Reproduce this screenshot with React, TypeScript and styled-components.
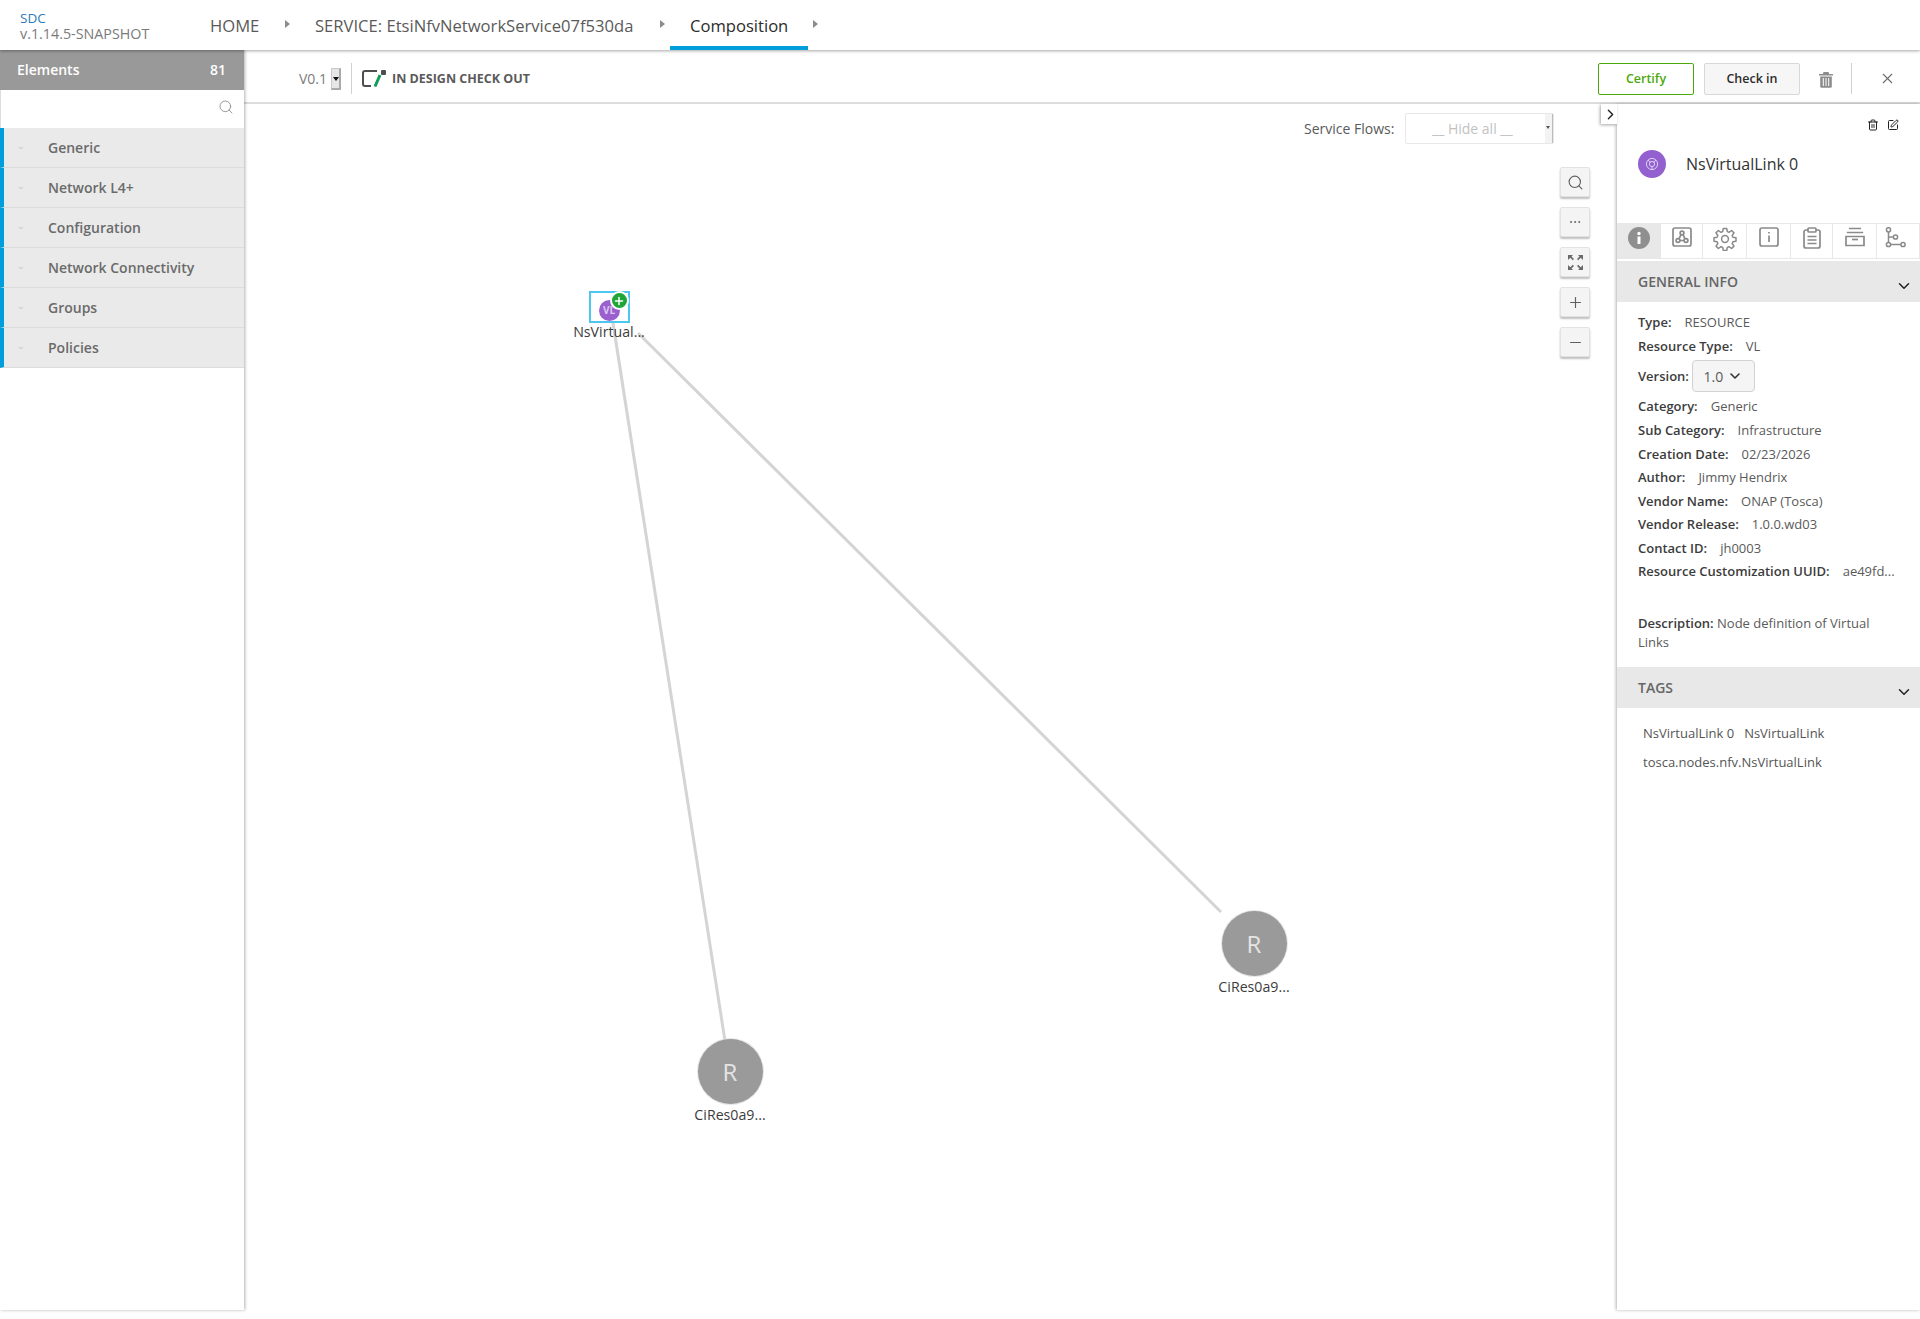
import React from 'react';
import styled, { createGlobalStyle } from 'styled-components';
import { Search, Plus, Minus, X, ChevronRight, ChevronDown, Trash2, SquarePen, Ellipsis } from 'lucide-react';

const GlobalStyle = createGlobalStyle`
    html, body {
        margin: 0;
        padding: 0;
        background: #fff;
        font-family: 'Open Sans', 'Liberation Sans', sans-serif;
        color: #5a5a5a;
    }
    * { box-sizing: border-box; }
`;

const crumbs = [
    { label: 'HOME', width: 105, active: false },
    { label: 'SERVICE: EtsiNfvNetworkService07f530da', width: 375, active: false },
    { label: 'Composition', width: 153, active: true },
];
const groups = ['Generic', 'Network L4+', 'Configuration', 'Network Connectivity', 'Groups', 'Policies'];
const infoRows = [
    { label: 'Type:', value: 'RESOURCE', height: 24 },
    { label: 'Resource Type:', value: 'VL', height: 24 },
];
const infoRowsAfter = [
    { label: 'Category:', value: 'Generic', height: 24 },
    { label: 'Sub Category:', value: 'Infrastructure', height: 24 },
    { label: 'Creation Date:', value: '02/23/2026', height: 23.5 },
    { label: 'Author:', value: 'Jimmy Hendrix', height: 23.5 },
    { label: 'Vendor Name:', value: 'ONAP (Tosca)', height: 23.5 },
    { label: 'Vendor Release:', value: '1.0.0.wd03', height: 23.5 },
    { label: 'Contact ID:', value: 'jh0003', height: 23.5 },
    { label: 'Resource Customization UUID:', value: 'ae49fd...', height: 23.5 },
];

export default function App() {
    return (
        <Page>
            <GlobalStyle />
            <Header>
                <Brand>
                    <BrandName>SDC</BrandName>
                    <BrandVersion>v.1.14.5-SNAPSHOT</BrandVersion>
                </Brand>
                <Crumbs>
                    {crumbs.map((c) => (
                        <Crumb key={c.label} $width={c.width}>
                            <CrumbLabel $active={c.active}>{c.label}</CrumbLabel>
                            <CrumbArrow />
                        </Crumb>
                    ))}
                </Crumbs>
            </Header>
            <Body>
                <Sidebar>
                    <SideTitle>
                        <span>Elements</span>
                        <span>81</span>
                    </SideTitle>
                    <SideSearch>
                        <Search size={16} strokeWidth={1.3} color="#8a8a8a" />
                    </SideSearch>
                    {groups.map((g) => (
                        <GroupRow key={g}>
                            <ChevronDown size={6} strokeWidth={2} color="#9a9a9a" />
                            <span>{g}</span>
                        </GroupRow>
                    ))}
                </Sidebar>
                <Main>
                    <Toolbar>
                        <VersionText>V0.1</VersionText>
                        <MiniSelect />
                        <ToolDivider />
                        <CheckoutIcon />
                        <StateText>IN DESIGN CHECK OUT</StateText>
                        <Spacer />
                        <CertifyButton>Certify</CertifyButton>
                        <CheckInButton>Check in</CheckInButton>
                        <TrashIcon />
                        <ToolDivider $tall />
                        <CloseWrap>
                            <X size={17} strokeWidth={1.6} color="#6b6b6b" />
                        </CloseWrap>
                    </Toolbar>
                    <Workspace>
                        <Canvas>
                            <FlowBar>
                                <FlowLabel>Service Flows:</FlowLabel>
                                <FlowSelect>
                                    <span>__ Hide all __</span>
                                    <FlowCaret />
                                </FlowSelect>
                            </FlowBar>
                            <ZoomColumn>
                                <ZoomButton><Search size={17} strokeWidth={1.6} /></ZoomButton>
                                <ZoomButton><Ellipsis size={14} strokeWidth={1.5} /></ZoomButton>
                                <ZoomButton><ExpandIcon /></ZoomButton>
                                <ZoomButton><Plus size={17} strokeWidth={1.6} /></ZoomButton>
                                <ZoomButton><Minus size={17} strokeWidth={1.6} /></ZoomButton>
                            </ZoomColumn>
                            <Lines width="1373" height="1215">
                                <line x1="369" y1="219" x2="481" y2="937" stroke="#d4d4d4" strokeWidth="3" />
                                <line x1="394" y1="229" x2="977" y2="808" stroke="#d4d4d4" strokeWidth="3" />
                            </Lines>
                            <VlNode>
                                <VlFrame>
                                    <VlCircle>VL</VlCircle>
                                    <PlusBadge>
                                        <Plus size={12} strokeWidth={3} color="#fff" />
                                    </PlusBadge>
                                </VlFrame>
                                <NodeLabel>NsVirtual...</NodeLabel>
                            </VlNode>
                            <ResourceNode $x={976} $y={807}>
                                <ResourceCircle>R</ResourceCircle>
                                <ResourceLabel>CiRes0a9...</ResourceLabel>
                            </ResourceNode>
                            <ResourceNode $x={452} $y={935}>
                                <ResourceCircle>R</ResourceCircle>
                                <ResourceLabel>CiRes0a9...</ResourceLabel>
                            </ResourceNode>
                        </Canvas>
                        <Panel>
                            <CollapseTab>
                                <ChevronRight size={17} strokeWidth={2} color="#222" />
                            </CollapseTab>
                            <PanelActions>
                                <Trash2 size={12} strokeWidth={2} color="#222" />
                                <SquarePen size={12} strokeWidth={2} color="#222" />
                            </PanelActions>
                            <PanelTitle>
                                <TitleCircle>
                                    <LinkGlyph />
                                </TitleCircle>
                                <TitleText>NsVirtualLink 0</TitleText>
                            </PanelTitle>
                            <Tabs>
                                <Tab $active $width={44}><InfoFilled /></Tab>
                                <Tab $width={42}><CompositionIcon /></Tab>
                                <Tab $width={44}><GearIcon /></Tab>
                                <Tab $width={44}><InfoSquare /></Tab>
                                <Tab $width={42}><ClipboardIcon /></Tab>
                                <Tab $width={44}><ArchiveIcon /></Tab>
                                <Tab $width={43}><BranchIcon /></Tab>
                            </Tabs>
                            <SectionBar>
                                <span>GENERAL INFO</span>
                                <ChevronDown size={18} strokeWidth={2} color="#222" />
                            </SectionBar>
                            <InfoBlock>
                                {infoRows.map((r) => (
                                    <InfoRow key={r.label} $height={r.height}>
                                        <b>{r.label}</b>
                                        <span>{r.value}</span>
                                    </InfoRow>
                                ))}
                                <VersionRow>
                                    <b>Version:</b>
                                    <VersionPicker>
                                        1.0 <ChevronDown size={16} strokeWidth={2.4} color="#333" />
                                    </VersionPicker>
                                </VersionRow>
                                {infoRowsAfter.map((r) => (
                                    <InfoRow key={r.label} $height={r.height}>
                                        <b>{r.label}</b>
                                        <span>{r.value}</span>
                                    </InfoRow>
                                ))}
                                <Description>
                                    <b>Description:</b> Node definition of Virtual Links
                                </Description>
                            </InfoBlock>
                            <SectionBar>
                                <span>TAGS</span>
                                <ChevronDown size={18} strokeWidth={2} color="#222" />
                            </SectionBar>
                            <TagBlock>
                                <TagLine>
                                    <span>NsVirtualLink 0</span>
                                    <span>NsVirtualLink</span>
                                </TagLine>
                                <TagLine>
                                    <span>tosca.nodes.nfv.NsVirtualLink</span>
                                </TagLine>
                            </TagBlock>
                        </Panel>
                    </Workspace>
                </Main>
            </Body>
        </Page>
    );
}

function CheckoutIcon() {
    return (
        <ToolIcon width="24" height="17" viewBox="0 0 24 17">
            <path d="M15 1H3a2 2 0 0 0-2 2v11a2 2 0 0 0 2 2h6" fill="none" stroke="#4f4f4f" strokeWidth="2" />
            <rect x="19" y="0" width="5" height="5" rx="1" fill="#4f4f4f" />
            <path d="M18 5 13 16.500" fill="none" stroke="#0f9d58" strokeWidth="3" />
        </ToolIcon>
    );
}

function TrashIcon() {
    return (
        <TrashWrap width="14" height="17" viewBox="0 0 14 17">
            <path d="M0 3h14v1.6H0zM4.500 1h5l.6 2H3.900z" fill="#8c8c8c" />
            <path d="M1.200 5.500h11.600V15.500a1.300 1.300 0 0 1-1.300 1.300H2.500a1.300 1.300 0 0 1-1.300-1.300z" fill="#8c8c8c" />
            <path d="M4.300 7v8M7 7v8M9.700 7v8" stroke="#fff" strokeWidth="1" />
        </TrashWrap>
    );
}

function ExpandIcon() {
    return (
        <svg width="15" height="15" viewBox="0 0 15 15" fill="#6a6a6a">
            <path d="M0 0h5L3.500 1.500 6 4 4.800 5.200 2.300 2.700 0 5z" />
            <path d="M15 0v5L12.700 2.700 10.200 5.200 9 4 11.500 1.500 10 0z" />
            <path d="M0 15v-5L2.300 12.300 4.800 9.800 6 11 3.500 13.500 5 15z" />
            <path d="M15 15h-5L11.500 13.500 9 11 10.200 9.800 12.700 12.300 15 10z" />
        </svg>
    );
}

function LinkGlyph() {
    return (
        <svg width="14" height="14" viewBox="0 0 14 14" fill="none" stroke="#e6daf5" strokeWidth="0.9">
            <circle cx="7" cy="7" r="5.600" />
            <circle cx="7" cy="7" r="2.600" />
            <path d="M3 3l2.500 2.500M11 3 8.800 5.500M7 12.500V9.600" />
        </svg>
    );
}

function InfoFilled() {
    return (
        <svg width="22" height="22" viewBox="0 0 22 22">
            <circle cx="11" cy="11" r="11" fill="#8f8f8f" />
            <rect x="9.500" y="9.500" width="3" height="7.500" fill="#fff" />
            <circle cx="11" cy="6.500" r="1.700" fill="#fff" />
        </svg>
    );
}

function CompositionIcon() {
    return (
        <svg width="20" height="20" viewBox="0 0 20 20" fill="none" stroke="#8a8a8a" strokeWidth="1.700">
            <rect x="1" y="1" width="18" height="18" rx="2" />
            <circle cx="10" cy="6" r="1.900" />
            <circle cx="6" cy="13.500" r="1.900" />
            <circle cx="14" cy="13.500" r="1.900" />
            <path d="M9 7.700 7 11.800M11 7.700l2 4.100M8 13.500h4" />
        </svg>
    );
}

function GearIcon() {
    return (
        <svg width="24" height="24" viewBox="0 0 24 24" fill="none" stroke="#8a8a8a" strokeWidth="1.500">
            <circle cx="12" cy="12" r="3.400" />
            <path d="M10.300 1.500h3.400l.6 3.100 1.700.7 2.600-1.800 2.400 2.400-1.800 2.600.7 1.700 3.100.6v3.400l-3.100.6-.7 1.700 1.800 2.600-2.400 2.400-2.600-1.800-1.700.7-.6 3.100h-3.400l-.6-3.100-1.700-.7-2.600 1.800-2.400-2.400 1.800-2.600-.7-1.700-3.100-.6v-3.400l3.100-.6.7-1.700-1.800-2.600 2.400-2.400 2.600 1.800 1.700-.7z" strokeLinejoin="round" />
        </svg>
    );
}

function InfoSquare() {
    return (
        <svg width="20" height="20" viewBox="0 0 20 20" fill="none" stroke="#8a8a8a" strokeWidth="1.700">
            <rect x="1" y="1" width="18" height="18" rx="2" />
            <path d="M10 8.500V15" />
            <path d="M10 5v1.600" />
        </svg>
    );
}

function ClipboardIcon() {
    return (
        <svg width="18" height="22" viewBox="0 0 18 22" fill="none" stroke="#8a8a8a" strokeWidth="1.700">
            <path d="M5 3H3A2 2 0 0 0 1 5v14a2 2 0 0 0 2 2h12a2 2 0 0 0 2-2V5a2 2 0 0 0-2-2H13" />
            <rect x="5" y="1" width="8" height="4" rx="1" />
            <path d="M4.500 9.500h9M4.500 13h9M4.500 16.500h9" />
        </svg>
    );
}

function ArchiveIcon() {
    return (
        <svg width="20" height="20" viewBox="0 0 20 20" fill="none" stroke="#8a8a8a" strokeWidth="1.700">
            <path d="M4 1.500h12M1.800 5.500h16.400" />
            <path d="M1 9.500h18v9H1z" />
            <path d="M7 12.500h6" />
        </svg>
    );
}

function BranchIcon() {
    return (
        <BranchSvg width="21" height="21" viewBox="0 0 21 21" fill="none" stroke="#8a8a8a" strokeWidth="1.500">
            <circle cx="3.500" cy="2.800" r="2.100" />
            <circle cx="3.500" cy="17.500" r="2.100" />
            <circle cx="10.500" cy="10" r="2.100" />
            <circle cx="18" cy="17.500" r="2.100" />
            <path d="M3.500 5v10.300M4 10h4.300M5.700 17.500h10.100" />
        </BranchSvg>
    );
}

const Page = styled.div`
    width: 1920px;
    height: 1319px;
    overflow: hidden;
    display: flex;
    flex-direction: column;
`;

const Header = styled.header`
    height: 50px;
    flex: none;
    display: flex;
    position: relative;
    z-index: 3;
    background: #fff;
    box-shadow: 0 1px 3px rgba(0, 0, 0, 0.35);
`;
const Brand = styled.div`
    width: 190px;
    padding: 11px 0 0 20px;
    line-height: 15px;
`;
const BrandName = styled.div`
    font-size: 13.500px;
    color: #2f7ab8;
`;
const BrandVersion = styled.div`
    font-size: 14.300px;
    color: #7a7a7a;
`;
const Crumbs = styled.nav`
    display: flex;
`;
const Crumb = styled.div<{ $width: number }>`
    width: ${(p) => p.$width}px;
    height: 50px;
    display: flex;
    justify-content: space-between;
`;
const CrumbLabel = styled.div<{ $active: boolean }>`
    height: 50px;
    line-height: 52px;
    font-size: 16.600px;
    padding: 0 20px;
    white-space: nowrap;
    color: ${(p) => (p.$active ? '#2c2c2c' : '#5a5a5a')};
    border-bottom: ${(p) => (p.$active ? '4px solid #009fdb' : 'none')};
`;
const CrumbArrow = styled.div`
    width: 0;
    height: 0;
    margin: 20px 5px 0 0;
    border-left: 5px solid #8c8c8c;
    border-top: 4px solid transparent;
    border-bottom: 4px solid transparent;
`;

const Body = styled.div`
    flex: 1;
    display: flex;
    min-height: 0;
`;

const Sidebar = styled.aside`
    width: 244px;
    flex: none;
    height: 1260px;
    position: relative;
    z-index: 2;
    background: #fff;
    box-shadow: 1px 0 3px rgba(0, 0, 0, 0.3);
`;
const SideTitle = styled.div`
    height: 40px;
    background: #999;
    color: #fff;
    font-size: 14px;
    font-weight: 600;
    display: flex;
    align-items: center;
    justify-content: space-between;
    padding: 0 18px 2px 17px;
`;
const SideSearch = styled.div`
    height: 38px;
    display: flex;
    align-items: center;
    justify-content: flex-end;
    padding: 0 10px 4px 0;
    border-left: 1px solid #ddd;
`;
const GroupRow = styled.div`
    height: 40px;
    background: #eaeaea;
    border-left: 4px solid #009fdb;
    border-bottom: 1px solid #dcdcdc;
    display: flex;
    align-items: center;
    font-size: 14px;
    font-weight: 600;
    color: #6a6a6a;
    padding-left: 14px;
    span {
        margin-left: 24px;
    }
    svg {
        margin-top: 1px;
        flex: none;
    }
`;

const Main = styled.main`
    flex: 1;
    min-width: 0;
    display: flex;
    flex-direction: column;
`;
const Toolbar = styled.div`
    height: 54px;
    flex: none;
    display: flex;
    align-items: center;
    padding: 5px 0 0 55px;
    border-bottom: 2px solid #dcdcdc;
`;
const VersionText = styled.div`
    font-size: 14px;
    color: #7d7d7d;
    width: 32px;
`;
const MiniSelect = styled.div`
    width: 10px;
    height: 22px;
    position: relative;
    background: #e6e6e6;
    border: 1px solid #c9c9c9;
    border-bottom: 2px solid #aaa;
    border-right: 2px solid #aaa;
    margin-right: 10px;
    &::after {
        content: '';
        position: absolute;
        left: 1px;
        top: 8px;
        border-left: 3px solid transparent;
        border-right: 3px solid transparent;
        border-top: 4px solid #111;
    }
`;
const ToolDivider = styled.div<{ $tall?: boolean }>`
    width: 1px;
    height: 31px;
    background: #d0d0d0;
    margin: ${(p) => (p.$tall ? '0 0 0 18px' : '0')};
`;
const ToolIcon = styled.svg`
    margin-left: 10px;
    flex: none;
`;
const StateText = styled.div`
    margin-left: 6px;
    font-size: 12.500px;
    font-weight: 700;
    color: #5a5a5a;
`;
const Spacer = styled.div`
    flex: 1;
`;
const BaseButton = styled.button`
    width: 96px;
    height: 32px;
    border-radius: 2px;
    font-family: inherit;
    font-size: 12.500px;
    font-weight: 600;
    padding: 0;
`;
const CertifyButton = styled(BaseButton)`
    background: #fff;
    border: 1px solid #4ca90c;
    color: #4ca90c;
    margin-right: 10px;
`;
const CheckInButton = styled(BaseButton)`
    background: #f6f6f6;
    border: 1px solid #d8d8d8;
    color: #2c2c2c;
    margin-right: 19px;
`;
const TrashWrap = styled.svg`
    flex: none;
    margin-top: 1px;
`;
const CloseWrap = styled.div`
    width: 68px;
    padding-left: 3px;
    display: flex;
    justify-content: center;
`;

const Workspace = styled.div`
    flex: 1;
    display: flex;
    min-height: 0;
`;
const Canvas = styled.section`
    flex: 1;
    position: relative;
    min-width: 0;
`;
const FlowBar = styled.div`
    position: absolute;
    top: 9px;
    left: 1060px;
    display: flex;
    align-items: center;
`;
const FlowLabel = styled.div`
    width: 101px;
    font-size: 14px;
    color: #5a5a5a;
`;
const FlowSelect = styled.div`
    width: 149px;
    height: 31px;
    position: relative;
    border: 1px solid #e8e8e8;
    border-radius: 2px;
    font-size: 14px;
    color: #c2c2c2;
    display: flex;
    align-items: center;
    padding-left: 26px;
`;
const FlowCaret = styled.div`
    position: absolute;
    right: 0;
    top: 0;
    width: 8px;
    height: 29px;
    background: #f3f3f3;
    border-right: 1px solid #bbb;
    &::after {
        content: '';
        position: absolute;
        left: 1px;
        top: 12px;
        border-left: 2.500px solid transparent;
        border-right: 2.500px solid transparent;
        border-top: 3px solid #555;
    }
`;
const ZoomColumn = styled.div`
    position: absolute;
    left: 1316px;
    top: 63px;
    display: flex;
    flex-direction: column;
    gap: 10px;
`;
const ZoomButton = styled.div`
    width: 30px;
    height: 30px;
    background: #f4f4f4;
    border: 1px solid #e2e2e2;
    border-radius: 2px;
    box-shadow: 0 2px 2px rgba(0, 0, 0, 0.25);
    display: flex;
    align-items: center;
    justify-content: center;
    color: #5f5f5f;
`;
const Lines = styled.svg`
    position: absolute;
    left: 0;
    top: 0;
`;
const VlNode = styled.div`
    position: absolute;
    left: 310px;
    top: 187px;
    width: 110px;
    display: flex;
    flex-direction: column;
    align-items: center;
`;
const VlFrame = styled.div`
    width: 41px;
    height: 32px;
    position: relative;
    border: 2px solid #4dc6f2;
    background: #fff;
`;
const VlCircle = styled.div`
    position: absolute;
    left: 8px;
    top: 7px;
    width: 21px;
    height: 21px;
    border-radius: 50%;
    background: #9b5fd0;
    color: #dcc7ef;
    font-size: 10px;
    font-weight: 700;
    line-height: 21px;
    text-align: center;
`;
const PlusBadge = styled.div`
    position: absolute;
    right: -1px;
    top: -2px;
    width: 19px;
    height: 19px;
    border-radius: 50%;
    background: #1fa637;
    border: 2px solid #fff;
    display: flex;
    align-items: center;
    justify-content: center;
`;
const NodeLabel = styled.div`
    font-size: 14.200px;
    line-height: 18px;
    color: #3c3c3c;
    white-space: nowrap;
`;
const ResourceLabel = styled(NodeLabel)`
    margin-top: 2px;
`;
const ResourceNode = styled.div<{ $x: number; $y: number }>`
    position: absolute;
    left: ${(p) => p.$x}px;
    top: ${(p) => p.$y}px;
    width: 68px;
    display: flex;
    flex-direction: column;
    align-items: center;
`;
const ResourceCircle = styled.div`
    width: 65px;
    height: 65px;
    border-radius: 50%;
    background: #9a9a9a;
    color: #e4e4e4;
    font-size: 24px;
    line-height: 65px;
    text-align: center;
    box-shadow: 0 0 0 1px #e6e6e6;
`;

const Panel = styled.aside`
    width: 303px;
    flex: none;
    height: 1206px;
    position: relative;
    background: #fff;
    box-shadow: -1px 0 3px rgba(0, 0, 0, 0.3);
`;
const CollapseTab = styled.div`
    position: absolute;
    left: -16px;
    top: 0;
    width: 16px;
    height: 20px;
    padding-left: 2px;
    background: #fff;
    box-shadow: -1px 1px 3px rgba(0, 0, 0, 0.35);
    display: flex;
    align-items: center;
    justify-content: center;
    svg {
        flex: none;
    }
`;
const PanelActions = styled.div`
    height: 42px;
    display: flex;
    justify-content: flex-end;
    gap: 8px;
    padding: 15px 21px 0 0;
`;
const PanelTitle = styled.div`
    height: 77px;
    padding: 0 0 42px 21px;
    display: flex;
    align-items: center;
`;
const TitleCircle = styled.div`
    width: 28px;
    height: 28px;
    border-radius: 50%;
    background: #9361cf;
    display: flex;
    align-items: center;
    justify-content: center;
`;
const TitleText = styled.div`
    margin-left: 20px;
    font-size: 16px;
    color: #333;
`;
const Tabs = styled.div`
    height: 36px;
    display: flex;
    border-top: 1px solid #e8e8e8;
    border-bottom: 1px solid #e8e8e8;
    margin-bottom: 2px;
`;
const Tab = styled.div<{ $active?: boolean; $width: number }>`
    width: ${(p) => p.$width}px;
    background: ${(p) => (p.$active ? '#e8e8e8' : '#fff')};
    border-right: 1px solid #e8e8e8;
    display: flex;
    justify-content: center;
    padding-top: 3px;
    svg {
        flex: none;
    }
`;
const BranchSvg = styled.svg`
    margin-right: 5px;
`;
const SectionBar = styled.div`
    height: 41px;
    background: #e8e8e8;
    display: flex;
    align-items: center;
    justify-content: space-between;
    padding: 0 7px 0 21px;
    font-size: 14px;
    font-weight: 600;
    color: #666;
    svg {
        margin-top: 8px;
    }
`;
const InfoBlock = styled.div`
    padding: 8px 10px 0 21px;
    height: 365px;
    font-size: 13px;
    color: #5a5a5a;
    b {
        font-weight: 600;
        color: #3c3c3c;
    }
`;
const InfoRow = styled.div<{ $height: number }>`
    height: ${(p) => p.$height}px;
    display: flex;
    align-items: center;
    gap: 13px;
    white-space: nowrap;
`;
const VersionRow = styled.div`
    height: 36px;
    display: flex;
    align-items: center;
    gap: 3px;
`;
const VersionPicker = styled.div`
    width: 63px;
    height: 32px;
    border: 1px solid #d2d2d2;
    border-radius: 4px;
    background: #f5f5f5;
    color: #5a5a5a;
    font-size: 14px;
    display: flex;
    align-items: center;
    justify-content: center;
    gap: 4px;
`;
const Description = styled.div`
    margin-top: 31px;
    line-height: 19px;
    width: 240px;
`;
const TagBlock = styled.div`
    padding: 10px 0 0 26px;
    font-size: 13px;
    color: #555;
`;
const TagLine = styled.div`
    height: 29px;
    display: flex;
    align-items: center;
    gap: 10px;
`;
